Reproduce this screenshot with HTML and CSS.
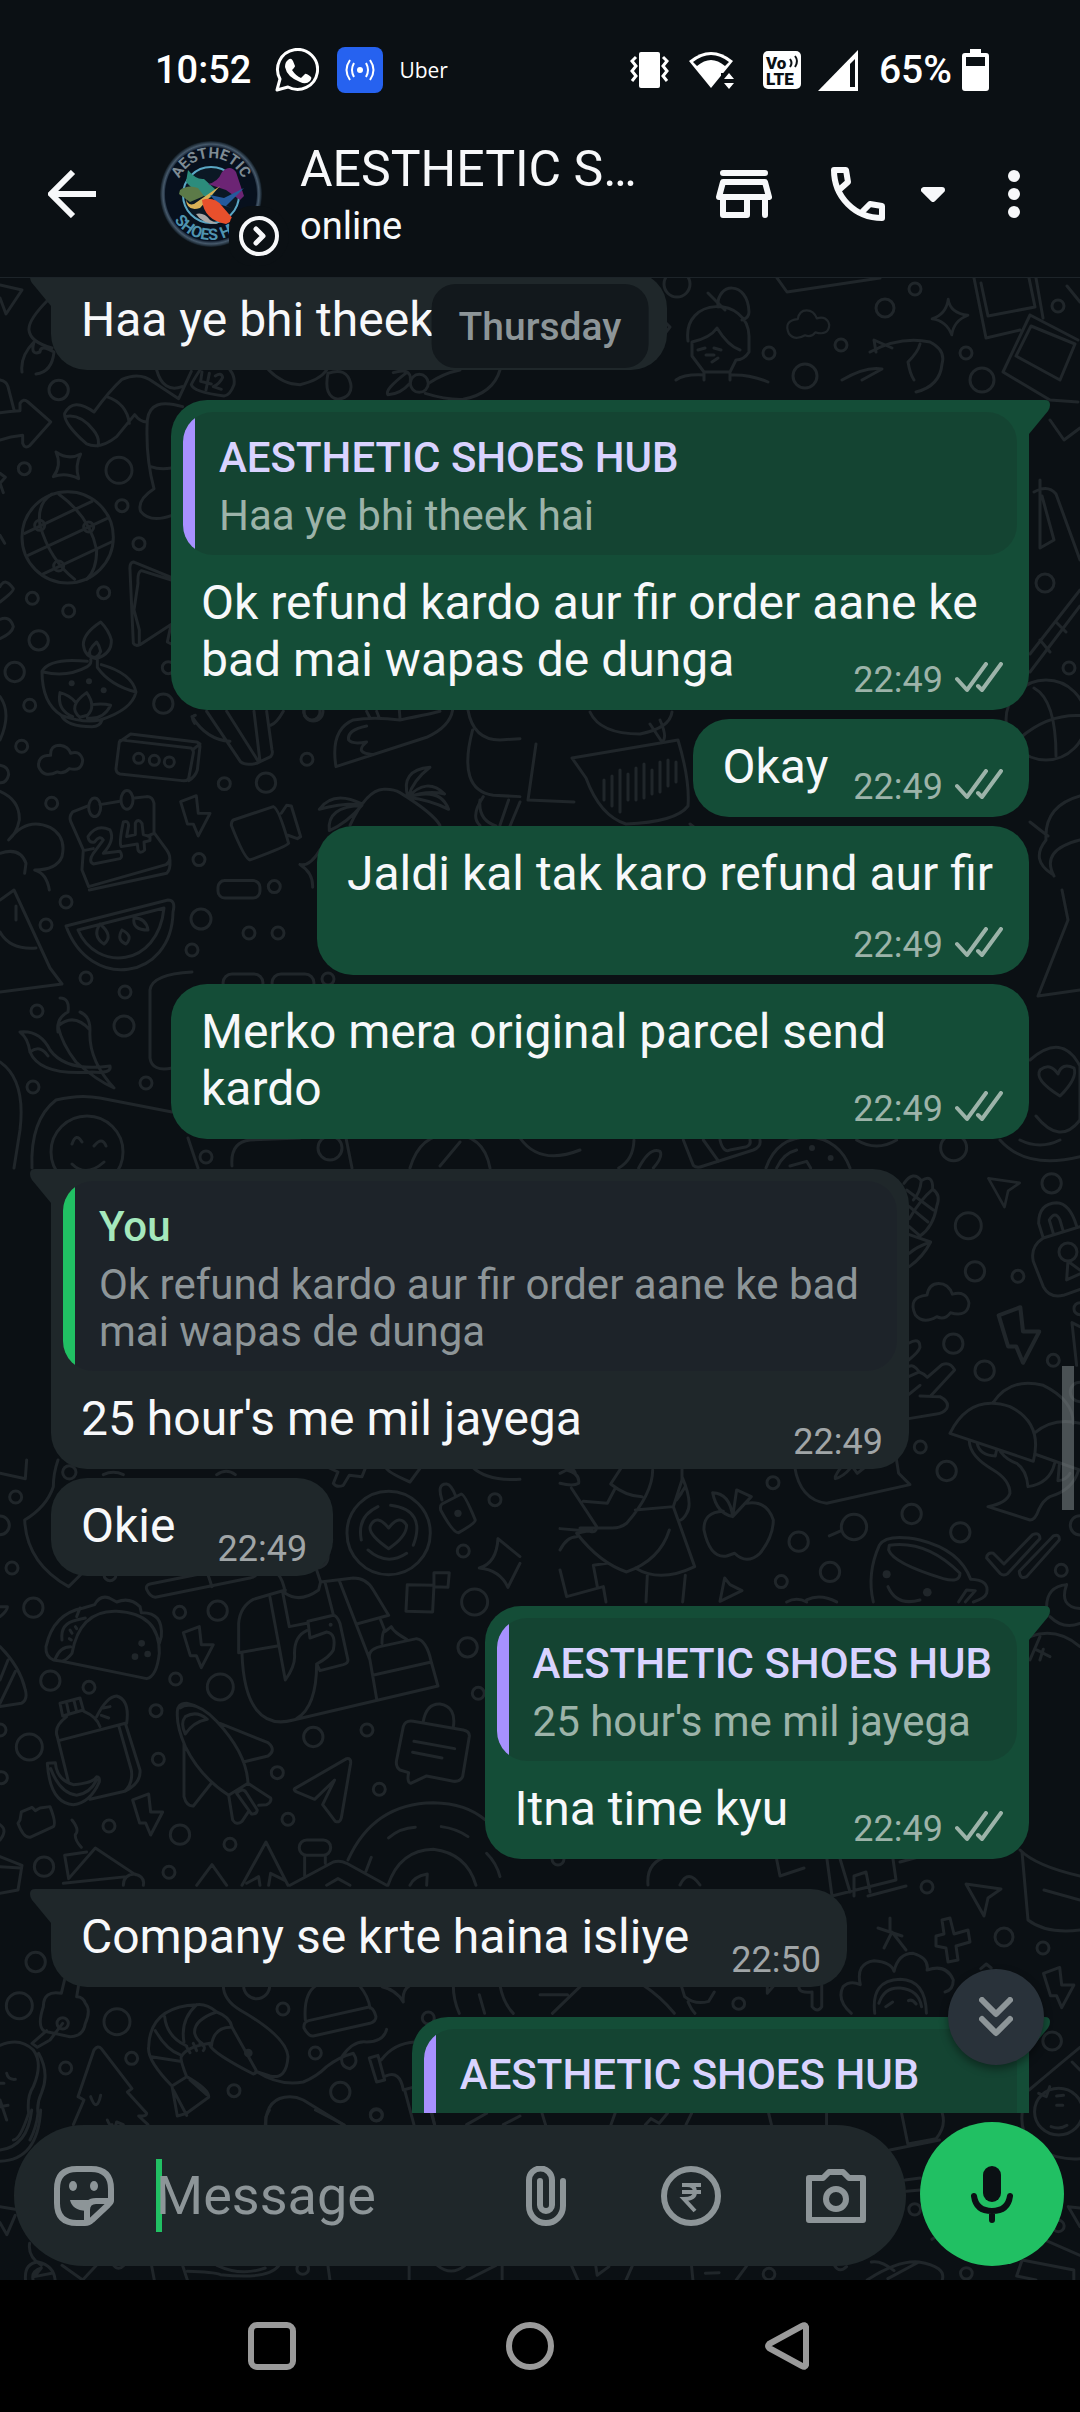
FILE: index.html
```html
<!DOCTYPE html>
<html lang="en">
    <head>
        <meta charset="utf-8">
        <meta name="viewport" content="width=device-width, initial-scale=1">
        <title>AESTHETIC SHOES HUB</title>
        <link rel="stylesheet" href="styles.css">
    </head>
    <body>
        <!-- Shared shapes -->
        <svg class="defs" width="0" height="0" aria-hidden="true">
            <symbol id="ticks" viewBox="0 0 48 31">
                <path d="M2 17L12 28L31 2M23 24L27 28L46 2" fill="none" stroke="currentColor" stroke-width="4" stroke-linecap="round" stroke-linejoin="round"/>
            </symbol>
            <symbol id="bolt" viewBox="0 0 34 46" overflow="visible">
                <path d="M2 8L18 2L20 20L32 20L20 43L15 31L9 31Z"/>
            </symbol>
            <symbol id="star" viewBox="0 0 40 40" overflow="visible">
                <path d="M18 0Q20 16 40 18Q24 24 22 40Q16 24 0 22Q16 17 18 0Z"/>
            </symbol>
            <symbol id="cloud" viewBox="0 0 60 44" overflow="visible">
                <path d="M16 14Q18 2 28 2Q38 2 42 13Q56 9 59 22Q58 37 40 32Q34 40 26 36Q12 44 4 34Q-4 16 16 14Z"/>
            </symbol>
            <symbol id="dart" viewBox="0 0 38 38" overflow="visible">
                <path d="M2 2L37 7L24 16L20 34Z"/>
            </symbol>
        </svg>

        <div class="status-bar">
            <time class="clock">10:52</time>
            <svg class="app-icon" width="44" height="44" viewBox="0 0 44 44">
                <path d="M2 42L5 31A20 20 0 1 1 13 39Z" fill="none" stroke="#fff" stroke-width="3" stroke-linejoin="round"/>
                <path d="M13 12q3-3 5 1l2 5q0 1-3 4q4 6 9 8l4-4q1-1 6 3q1 1-1 4q-4 4-10 1q-13-5-15-15q0-5 3-7z" fill="#fff"/>
            </svg>
            <svg class="uber-icon" width="46" height="46" viewBox="0 0 46 46">
                <rect width="46" height="46" rx="8" fill="#2662f0"/>
                <circle cx="23" cy="23" r="3" fill="#fff"/>
                <path d="M17 16q-4 7 0 14M29 16q4 7 0 14M13 13q-7 10 0 20M33 13q7 10 0 20" fill="none" stroke="#fff" stroke-width="2"/>
            </svg>
            <span class="uber">Uber</span>
            <div class="indicators">
                <svg width="39" height="38" viewBox="0 0 39 38">
                    <rect x="9" y="1" width="21" height="36" rx="2" fill="#fff"/>
                    <path d="M6 6L2 10L6 15L2 20L6 25L2 30M33 6L37 10L33 15L37 20L33 25L37 30" fill="none" stroke="#fff" stroke-width="3"/>
                </svg>
                <svg class="wifi" width="46" height="38" viewBox="0 0 46 38">
                    <path d="M0 10Q22-8 44 10L22 37Z" fill="#fff"/>
                    <path d="M4 11Q22-3 40 11L36 15Q22 3 8 15Z" fill="#0b1014"/>
                    <path d="M32 38V22h14v16z" fill="#0b1014"/>
                    <path d="M35 28L40 22L45 28ZM35 32L40 38L45 32Z" fill="#fff"/>
                </svg>
                <svg class="volte" width="38" height="38" viewBox="0 0 38 38">
                    <rect width="38" height="38" rx="5" fill="#fff"/>
                    <text x="3" y="18" class="volte-text">Vo</text>
                    <text x="3" y="34" class="volte-text">LTE</text>
                    <path d="M27 8q3 4 0 8M32 5q4 5 0 11" fill="none" stroke="#0b1014" stroke-width="2"/>
                </svg>
                <svg class="signal" width="41" height="41" viewBox="0 0 41 41">
                    <path d="M0 41L40 0V41Z" fill="#fff"/>
                    <path d="M32 14L37 9V37H32Z" fill="#0b1014"/>
                </svg>
                <span class="battery-level">65%</span>
                <svg width="27" height="42" viewBox="0 0 27 42">
                    <path d="M8 4V0H19V4H24Q27 4 27 7V39Q27 42 24 42H3Q0 42 0 39V7Q0 4 3 4Z" fill="#fff"/>
                    <rect x="4" y="8" width="19" height="9" fill="#0b1014"/>
                </svg>
            </div>
        </div>

        <header class="header">
            <button class="icon-btn" aria-label="Back">
                <svg width="48" height="48" viewBox="0 0 48 48"><path d="M25 2L3 24L25 46M3 24H48" fill="none" stroke="currentColor" stroke-width="6"/></svg>
            </button>
            <a class="contact" href="#profile">
                <span class="avatar">
                    <svg width="102" height="108" viewBox="0 0 102 108">
                        <defs>
                            <radialGradient id="glow">
                                <stop offset="88%" stop-color="#0a1526"/>
                                <stop offset="94%" stop-color="#46596b"/>
                                <stop offset="100%" stop-color="#101a22"/>
                            </radialGradient>
                            <path id="arc-top" d="M16 54A35 36 0 0 1 86 54"/>
                            <path id="arc-bottom" d="M7 56A44 44 0 0 0 95 56"/>
                        </defs>
                        <ellipse cx="51" cy="54" rx="51" ry="53" fill="url(#glow)"/>
                        <ellipse cx="51" cy="54" rx="46" ry="47" fill="#07101d"/>
                        <circle cx="51" cy="55" r="28" fill="#0b1824" stroke="#5aa6c4" stroke-width="2"/>
                        <path d="M28 30Q36 40 44 39L56 50L50 58L38 54L26 42Z" fill="#2c8c7c"/>
                        <path d="M20 50Q28 44 38 48L44 56L30 62L19 54Z" fill="#5c7a48"/>
                        <path d="M62 32Q70 24 76 32L84 56L80 60L66 50L48 44Q58 42 62 32Z" fill="#6c2474"/>
                        <path d="M26 58Q27 66 34 64L60 46L40 68Q26 72 26 58Z" fill="#d9b056"/>
                        <path d="M50 55L64 58L84 48L66 66L72 68L58 64Z" fill="#245a9c"/>
                        <path d="M42 60Q54 56 62 66L74 80L66 84Q44 80 42 60Z" fill="#e8502c"/>
                        <path d="M36 74Q44 72 50 80L58 84Q42 84 36 74Z" fill="#a9a8a6"/>
                        <text class="logo-top"><textPath href="#arc-top" startOffset="50%">AESTHETIC</textPath></text>
                        <text class="logo-bottom"><textPath href="#arc-bottom" startOffset="50%">SHOES HUB</textPath></text>
                    </svg>
                    <span class="badge">
                        <svg width="40" height="40" viewBox="0 0 40 40" fill="none" stroke="#f7f8fa"><circle cx="20" cy="20" r="18" stroke-width="4"/><path d="M17 13L24 20L17 27" stroke-width="5" stroke-linecap="round" stroke-linejoin="round"/></svg>
                    </span>
                </span>
                <span class="names">
                    <span class="title">AESTHETIC SHOES HUB</span>
                    <span class="presence">online</span>
                </span>
            </a>
            <button class="icon-btn store" aria-label="Store">
                <svg width="56" height="48" viewBox="0 0 56 48" fill="none" stroke="currentColor" stroke-width="6" stroke-linecap="round" stroke-linejoin="round"><path d="M7 3H49M7 12H49L53 27H3ZM7 27V45H31V27M49 27V45"/></svg>
            </button>
            <button class="icon-btn call" aria-label="Call">
                <svg width="54" height="54" viewBox="0 0 54 54" fill="none" stroke="currentColor" stroke-width="6" stroke-linejoin="round"><path d="M8 23L17 15L15 3H3C3 30 24 51 51 51V39L39 37L30 46"/></svg>
            </button>
            <button class="icon-btn call-more" aria-label="Call options">
                <svg width="24" height="15" viewBox="0 0 24 15"><path d="M3 3H21L12 12Z" fill="currentColor" stroke="currentColor" stroke-width="6" stroke-linejoin="round"/></svg>
            </button>
            <button class="icon-btn more" aria-label="More options">
                <svg width="12" height="48" viewBox="0 0 12 48" fill="currentColor"><circle cx="6" cy="6" r="6"/><circle cx="6" cy="24" r="6"/><circle cx="6" cy="42" r="6"/></svg>
            </button>
        </header>

        <div class="conversation">
            <svg class="wallpaper" viewBox="0 278 1080 2002" preserveAspectRatio="xMidYMin slice" aria-hidden="true">
                <!-- top strip -->
                <g>
                    <path d="M0 285L22 290L6 314L0 298M48 300Q28 320 29 330Q30 342 52 348M22 372Q20 356 34 342Q30 356 40 352Q40 344 54 352Q52 372 36 374"/>
                    <circle cx="677" cy="284" r="13"/>
                    <path d="M663 320L670 327L663 336M777 278L787 292L880 278M708 293L725 310"/>
                    <path d="M718 307C716 282 748 280 749 312Q749 318 742 320M688 341C682 296 748 296 749 336V352Q744 360 736 360L730 372H704L692 356V342Q710 338 717 328Q728 346 740 350M698 350L705 348M714 348L721 350M706 355L714 355M712 362L718 358M704 372V380M730 372V380M676 380Q684 374 704 375M730 375Q750 374 768 382"/>
                    <use href="#cloud" x="786" y="308" width="44" height="34"/>
                    <circle cx="769" cy="353" r="6"/><circle cx="841" cy="345" r="6"/><circle cx="915" cy="289" r="6"/><circle cx="966" cy="353" r="6"/><circle cx="885" cy="308" r="9"/><circle cx="805" cy="376" r="12"/><circle cx="1058" cy="306" r="6"/><circle cx="982" cy="380" r="12"/>
                    <use href="#star" x="932" y="299" width="36" height="36"/>
                    <path d="M870 352Q900 336 930 342Q946 350 942 364Q940 386 916 392M892 348L874 340L876 352M920 344Q918 352 908 362Q910 374 914 380M842 380Q866 366 882 369L862 380M974 278L986 338L1020 330M1036 278L1043 318M981 283L988 316L1035 307L1029 278M1030 315L1078 340M1030 315L1003 372L1050 400L1078 402M1031 326L1016 356L1060 380L1075 344ZM1067 286L1080 302"/>
                </g>
                <!-- right strip -->
                <g>
                    <path d="M1050 420L1064 440L1080 428M1034 492Q1048 484 1056 494L1080 560M1040 480V548L1054 540L1042 496M1080 590L1030 654M1080 606L1030 672M1040 640L1050 652M1056 622L1066 632"/>
                    <circle cx="1045" cy="583" r="9"/><circle cx="1069" cy="668" r="6"/><circle cx="1046" cy="720" r="40"/>
                    <path d="M1034 688Q1056 700 1056 756M1020 738Q1050 712 1086 716M1030 822Q1040 830 1048 836M1052 874Q1030 860 1046 840Q1044 806 1080 796M1080 840Q1040 850 1054 876M1062 890L1068 920L1038 996L1080 990M1030 1060Q1062 1032 1080 1066V1120Q1060 1146 1036 1116"/>
                    <path d="M1060 1096Q1034 1080 1040 1070Q1050 1062 1058 1074Q1062 1062 1074 1068Q1078 1078 1060 1096Z"/>
                    <path d="M1044 1890L1080 1900M1020 1850Q1036 1866 1080 1876M1022 1852L1028 1920Q1046 1934 1080 1930"/>
                </g>
                <!-- left column, upper part -->
                <g transform="translate(0 370) scale(.3333)">
                    <circle cx="176" cy="60" r="29"/><circle cx="73" cy="296" r="18"/><circle cx="357" cy="301" r="39"/><circle cx="366" cy="407" r="18"/><circle cx="417" cy="521" r="18"/><circle cx="97" cy="685" r="18"/><circle cx="206" cy="723" r="18"/><circle cx="311" cy="668" r="18"/><circle cx="116" cy="811" r="29"/><circle cx="44" cy="906" r="29"/><circle cx="89" cy="1006" r="18"/><circle cx="490" cy="1001" r="29"/><circle cx="65" cy="1129" r="18"/><circle cx="155" cy="1300" r="18"/><circle cx="673" cy="1241" r="18"/><circle cx="798" cy="1238" r="29"/><circle cx="921" cy="1168" r="18"/><circle cx="597" cy="1469" r="18"/><circle cx="940" cy="1024" r="29"/><circle cx="505" cy="893" r="18"/>
                    <path d="M0 30Q20 34 24 50L42 120M0 128Q30 124 60 122V100Q70 84 84 96L152 156L90 226Q74 238 68 220V196Q30 200 0 210"/>
                    <path d="M282 126Q330 60 366 28Q420 4 460 36L536 86L574 4M320 80Q380 100 388 160M282 126Q220 80 194 130Q190 160 260 222Q300 240 350 200L404 134Q420 156 440 156M196 140Q240 130 280 180Q300 204 294 228M470 0Q490 70 546 50M600 0Q580 30 574 44Q580 66 672 78Q690 76 702 44Q706 20 690 0M548 110Q450 80 442 150Q436 260 462 356Q410 390 422 424Q450 460 516 436M452 290Q480 300 514 294"/>
                    <path d="M606 6L602 34L634 42M628 10L618 60M646 18Q664 6 668 22Q660 40 640 50L664 58M806 0Q850 44 900 44Q960 30 980 0M984 10Q970 80 1014 88Q1060 80 1052 40Q1040 -10 984 10M1180 8Q1240 -10 1230 40Q1200 74 1164 74Q1152 60 1220 8M1286 40Q1330 10 1380 0M1276 70Q1340 90 1390 88Q1480 70 1500 0"/><circle cx="1258" cy="40" r="27"/>
                    <path d="M168 246Q206 272 242 252Q224 286 236 326Q196 306 160 320Q186 286 168 246Z"/>
                    <circle cx="203" cy="502" r="137"/><path d="M74 490L276 394M84 556L320 446M130 612L334 516M120 466Q110 400 156 372M120 466Q150 570 224 628M176 372Q270 440 290 540Q290 600 260 628"/><circle cx="119" cy="466" r="15"/><circle cx="266" cy="471" r="15"/><circle cx="176" cy="588" r="15"/>
                    <path d="M514 622L400 576Q388 578 390 600L400 820Q406 830 420 824L512 764M514 630L424 602Q412 606 414 640L402 720L418 780V824M512 770L502 816L514 822M0 650Q16 620 40 656Q42 664 0 696M0 748Q30 736 40 770Q36 790 0 806"/>
                    <path d="M302 756Q250 790 250 824Q254 862 290 866Q336 850 334 810Q326 780 302 756ZM290 816Q262 842 270 856Q290 872 302 844Q298 826 290 816ZM272 868Q276 880 262 890Q200 924 130 906M292 870V892Q330 946 408 966M262 874Q150 862 126 904Q126 1000 184 1036Q250 1060 300 1050Q396 1020 408 966Q396 910 304 884M184 1036Q200 1070 276 1070Q300 1070 306 1050M218 1040Q170 1020 180 968Q206 974 226 996M240 1042Q200 1010 260 968Q290 1010 262 1036ZM276 1004Q310 1000 332 1006Q310 1050 262 1044"/>
                    <g class="dots"><circle cx="215" cy="940" r="9"/><circle cx="267" cy="934" r="9"/><circle cx="311" cy="961" r="9"/></g>
                    <path d="M152 1156Q150 1126 180 1126Q206 1130 212 1150Q240 1140 248 1170Q246 1206 208 1196Q190 1214 172 1206Q130 1226 116 1190Q112 1156 152 1156Z"/>
                    <path d="M360 1112Q370 1108 380 1112L572 1134Q582 1138 580 1150L566 1226Q560 1234 546 1232L360 1212Q348 1208 348 1196L358 1116L392 1092L590 1116Q600 1120 600 1130L592 1200Q586 1220 566 1232M578 1140L600 1122"/><circle cx="416" cy="1165" r="15"/><circle cx="463" cy="1171" r="15"/><circle cx="508" cy="1176" r="15"/>
                    <path d="M576 1040Q620 1110 690 1114M620 1024L722 1176Q736 1188 770 1180L812 1160Q820 1150 816 1140L800 1024M680 1024L776 1176M762 1024L780 1174M586 1036Q570 1040 584 1060M812 1066Q830 1060 850 1024"/>
                    <path d="M1008 1190Q990 1080 1060 1050Q1120 1040 1200 1050Q1300 1030 1320 1024M1008 1190L1280 1102Q1350 1070 1358 1020M1100 1068Q1040 1080 1046 1110Q1056 1124 1100 1116Q1060 1150 1120 1154M1100 1024L1110 1044M1130 1024L1138 1044M1198 1020L1200 1044"/>
                    <path d="M1404 1020Q1420 1110 1500 1110L1560 1106M1418 1080Q1370 1260 1480 1276L1560 1280M1450 1280Q1410 1340 1440 1366M1526 1290L1500 1366"/>
                    <path d="M1050 1366Q1100 1260 1150 1258Q1180 1256 1200 1268Q1300 1330 1320 1366M958 1318Q1000 1260 1086 1302Q1020 1300 958 1318ZM1086 1306Q980 1310 988 1382Q1040 1360 1086 1306ZM1224 1282Q1200 1200 1290 1192Q1240 1230 1224 1282Q1280 1220 1334 1272Q1280 1260 1224 1282Q1320 1250 1346 1318Q1290 1290 1224 1282Z"/>
                    <use href="#bolt" x="536" y="1270" width="100" height="138"/>
                    <path d="M700 1350L820 1310Q836 1314 866 1420Q860 1430 750 1470Q734 1468 694 1366Q694 1354 700 1350ZM844 1330L860 1306L874 1308L902 1400L892 1406L864 1396"/>
                    <path d="M264 1308L218 1326Q206 1340 212 1354L250 1440L246 1500L266 1550L498 1484Q520 1470 500 1440L462 1388V1300Q458 1280 440 1280L404 1284M300 1304L360 1294M250 1442L280 1436M444 1398L462 1390M268 1560L500 1510Q512 1500 510 1470"/><ellipse cx="284" cy="1312" rx="18" ry="28"/><ellipse cx="381" cy="1290" rx="18" ry="28"/>
                    <path d="M264 1400Q290 1360 330 1380Q346 1410 310 1450L360 1444Q370 1460 360 1466L280 1482Q264 1474 280 1450L310 1410Q300 1394 284 1416Q266 1420 264 1400ZM370 1356Q384 1350 386 1366L380 1400L406 1394V1360Q414 1344 426 1360L430 1394L450 1400V1412L432 1416L434 1440Q420 1454 414 1440L412 1422L364 1430Q356 1420 370 1356Z"/>
                    <path d="M0 1264Q60 1290 58 1350Q50 1390 26 1410Q80 1340 150 1372Q200 1400 186 1460Q170 1500 104 1500Q140 1510 148 1560M0 1450Q60 1430 78 1480L74 1510M0 1186Q26 1190 26 1214Q20 1240 0 1238M0 980Q36 1030 0 1110"/>
                    <path d="M900 1484Q930 1490 960 1440M900 1484Q940 1510 938 1552M0 310L16 322L0 340L10 368M0 496L14 520"/>
                    <rect x="654" y="1532" width="126" height="52" rx="20"/><circle cx="823" cy="1550" r="18"/>
                </g>
                <!-- left column, melon and chillies -->
                <g>
                    <path d="M66 926L168 900Q176 900 173 912C172 980 90 992 66 926ZM78 930L164 908C158 968 96 972 78 930ZM100 924Q92 936 104 944Q114 936 100 924M122 930Q116 940 126 944Q134 936 122 930M134 918Q132 930 148 930Q146 918 134 918"/>
                    <circle cx="201" cy="919" r="10"/><circle cx="249" cy="933" r="6"/><circle cx="278" cy="933" r="6"/><circle cx="192" cy="950" r="6"/><circle cx="46" cy="925" r="6"/><circle cx="66" cy="902" r="6"/><circle cx="86" cy="978" r="6"/><circle cx="125" cy="992" r="6"/><circle cx="124" cy="1026" r="10"/><circle cx="37" cy="1011" r="6"/><circle cx="146" cy="1083" r="6"/><circle cx="33" cy="1087" r="6"/>
                    <path d="M0 900L14 890L50 968L62 984L0 992M0 932Q10 950 36 948M16 906V920M192 972Q152 974 150 990V1058Q152 1072 172 1068"/>
                    <rect x="223" y="974" width="40" height="18" rx="9"/><rect x="272" y="974" width="42" height="18" rx="9"/><circle cx="328" cy="979" r="6"/>
                    <path d="M60 998Q70 998 68 1012Q56 1018 58 1032M80 1012Q90 1016 90 1030M58 1026Q74 1012 90 1030Q88 1060 114 1088Q96 1080 76 1062Q62 1044 58 1026ZM20 1032Q40 1030 50 1050Q66 1072 110 1066Q112 1074 92 1072Q40 1076 30 1052Q28 1038 20 1032M30 1052Q40 1044 48 1056"/>
                    <path d="M32 1168Q30 1120 56 1100Q80 1094 100 1098L172 1112"/><circle cx="87" cy="1152" r="36"/><path d="M72 1144Q76 1132 82 1142M94 1146Q102 1136 106 1146M72 1164Q86 1178 104 1162M0 1062Q26 1080 20 1130L14 1168"/>
                    <path d="M188 1138L198 1168M232 1166Q230 1142 250 1140L300 1138M346 1138L352 1168M410 1168Q420 1134 450 1134Q484 1134 490 1168M440 1166L460 1142M520 1138Q540 1166 580 1150"/>
                    <circle cx="330" cy="1148" r="12"/><circle cx="206" cy="1157" r="6"/>
                </g>
                <!-- between the outgoing bubbles -->
                <g>
                    <path d="M572 758L678 740Q690 780 688 806Q676 822 626 824Q600 816 586 778ZM604 780V800M612 776V806M620 770V812M628 774V800M636 768V800M644 764V798M652 770V794M660 762V792M668 760V786M676 762V782"/>
                    <path d="M590 712Q600 734 640 734Q670 728 672 712M650 724L662 742Q668 738 660 720M536 744L528 800L574 802M480 800Q478 820 496 826M520 802L510 826M690 824L700 832"/>
                    <circle cx="312" cy="712" r="8"/>
                </g>
                <!-- middle and right -->
                <g transform="translate(560 1140) scale(.3333)">
                    <circle cx="1181" cy="23" r="39"/><circle cx="1475" cy="130" r="29"/><circle cx="1225" cy="257" r="39"/><circle cx="1245" cy="394" r="29"/><circle cx="1374" cy="409" r="18"/><circle cx="1180" cy="611" r="29"/><circle cx="1274" cy="692" r="29"/><circle cx="1480" cy="661" r="18"/><circle cx="1081" cy="921" r="18"/><circle cx="1160" cy="993" r="29"/><circle cx="639" cy="1028" r="18"/><circle cx="716" cy="1205" r="29"/><circle cx="882" cy="1161" r="38"/><circle cx="1055" cy="1122" r="29"/><circle cx="1201" cy="1177" r="29"/><circle cx="664" cy="1325" r="18"/><circle cx="810" cy="1296" r="29"/><circle cx="1504" cy="1291" r="18"/><circle cx="1560" cy="756" r="29"/><circle cx="1560" cy="1156" r="29"/><circle cx="1560" cy="506" r="18"/>
                    <path d="M844 1172L808 1188M222 0Q220 60 176 84M236 84Q270 20 300 34Q310 50 280 84M370 0L400 76Q410 86 430 78L580 30Q604 20 600 0M430 0L476 64M480 0Q490 40 510 30L560 20Q574 14 570 0M618 84Q650 -10 750 -10Q840 0 870 84M650 84Q670 40 710 30M690 78L740 64L752 84M890 0Q950 36 1010 0M1320 0Q1400 90 1560 50M1380 0Q1440 30 1500 0"/>
                    <g class="dots"><circle cx="756" cy="24" r="9"/><circle cx="812" cy="54" r="9"/><circle cx="980" cy="1303" r="12"/><circle cx="1102" cy="1357" r="13"/></g>
                    <use href="#dart" x="1274" y="110" width="114" height="102"/>
                    <path d="M1032 130Q1060 90 1084 122Q1120 100 1118 148Q1144 164 1130 200Q1120 260 1080 288L1048 260M1040 150L1120 210M1048 200L1104 246M1084 122Q1080 160 1060 180M1118 148Q1080 180 1048 236M1048 284L1112 306Q1090 350 1048 380M1112 306Q1070 320 1048 340"/>
                    <path d="M1450 294L1436 250Q1436 190 1490 188Q1530 190 1550 258M1480 280L1468 240Q1486 210 1500 240L1510 274M1450 294L1560 260M1450 294Q1410 320 1420 364L1450 440Q1470 476 1510 466L1560 448M1524 364L1520 420L1560 402M1524 364L1560 390"/><circle cx="1524" cy="336" r="27"/>
                    <use href="#cloud" x="1054" y="424" width="176" height="130"/>
                    <use href="#bolt" x="1308" y="492" width="138" height="190"/>
                    <path d="M1560 560L1536 548L1550 676M1046 610Q1080 590 1080 622Q1076 636 1046 660M1046 680Q1060 670 1078 696L1046 710M1078 696Q1090 700 1102 712L1146 674Q1170 664 1184 690L1114 766M1046 764L1080 736M1080 768L1140 770Q1170 786 1160 806Q1150 820 1130 822L1046 836"/>
                    <path d="M1170 880Q1230 760 1350 800Q1450 850 1420 964ZM1298 790Q1350 710 1450 736Q1540 780 1540 850M1422 880Q1480 830 1560 850M1424 942L1560 990M1228 904Q1230 950 1300 990Q1350 1020 1350 1060Q1340 1090 1284 1100L1410 1140Q1426 1140 1436 1110Q1450 1080 1470 1070Q1540 1050 1556 990M1252 912Q1260 946 1306 948L1310 930M1322 936Q1340 960 1370 970Q1400 990 1404 1040Q1470 1030 1484 970M1498 976L1494 1022Q1520 1020 1530 1000"/>
                    <path d="M458 1058Q510 1060 518 1130Q470 1120 458 1058ZM518 1130L530 1050L574 1070ZM490 1114Q430 1116 432 1170Q450 1256 500 1248L524 1240Q560 1276 600 1240Q640 1190 640 1140Q620 1080 560 1090"/>
                    <path d="M704 980Q720 1080 800 1090L1050 1034L1016 1000L1008 950M826 1010Q850 960 870 986Q850 1010 826 1016ZM880 984L892 1000L912 984"/>
                    <path d="M0 1000L20 990Q60 1000 56 1030Q40 1040 0 1030M20 990Q40 980 46 1000M34 1044L110 1160Q110 1180 90 1174L0 1166M70 1084L142 1090L166 1044M186 980L152 1032Q200 1070 246 1070M278 990Q278 1060 200 1150Q180 1166 150 1164H60M366 980V1020L340 1100L404 1280Q300 1330 226 1284M226 1110L340 1100M366 1010Q400 1090 380 1120Q370 1140 356 1142M364 1060L350 1080L376 1040M50 1180Q120 1270 200 1296Q300 1260 328 1170M50 1180L96 1170M140 1270L100 1276L112 1340M0 1290L20 1370L130 1340L138 1386M262 1306L258 1386M376 1306L368 1386M0 1230Q20 1190 50 1190"/>
                    <path d="M494 1314L510 1334L546 1352L480 1384ZM680 1386Q710 1370 740 1386M740 1380Q780 1360 830 1386"/>
                    <path d="M958 1216Q980 1180 1080 1200Q1200 1230 1232 1318Q1290 1320 1280 1360Q1274 1376 1240 1386M958 1216Q920 1300 940 1386M988 1216Q1100 1200 1200 1300Q1200 1330 1150 1316Q1000 1270 986 1230ZM984 1340Q1010 1400 1080 1380M1196 1386L1220 1350L1246 1352L1216 1386"/>
                    <path d="M1300 1240L1332 1272L1418 1184Q1440 1176 1440 1196L1344 1300Q1332 1310 1320 1300L1280 1254Q1282 1236 1300 1240ZM1378 1294L1480 1188Q1500 1180 1498 1200L1400 1310Q1380 1320 1378 1294Z"/>
                    <path d="M1520 1334Q1460 1340 1460 1400M1470 1430Q1510 1470 1560 1450M1520 1334Q1496 1400 1560 1406M1410 1490Q1490 1460 1560 1520M1440 1490L1410 1560M1430 1530L1470 1550M1450 1528L1440 1560"/>
                </g>
                <!-- left column, lower part -->
                <g transform="translate(0 1460) scale(.3333)">
                    <circle cx="208" cy="37" r="20"/><circle cx="47" cy="111" r="18"/><circle cx="0" cy="196" r="28"/><circle cx="36" cy="324" r="18"/><circle cx="330" cy="344" r="18"/><circle cx="100" cy="443" r="29"/><circle cx="539" cy="457" r="18"/><circle cx="653" cy="452" r="29"/><circle cx="151" cy="662" r="29"/><circle cx="267" cy="682" r="18"/><circle cx="527" cy="657" r="18"/><circle cx="661" cy="681" r="39"/><circle cx="468" cy="752" r="18"/><circle cx="88" cy="861" r="39"/><circle cx="0" cy="810" r="18"/><circle cx="4" cy="953" r="18"/><circle cx="475" cy="898" r="18"/><circle cx="940" cy="831" r="29"/><circle cx="1101" cy="810" r="18"/><circle cx="832" cy="938" r="18"/><circle cx="1138" cy="988" r="18"/><circle cx="864" cy="1078" r="18"/><circle cx="327" cy="1098" r="18"/><circle cx="540" cy="1124" r="29"/><circle cx="690" cy="1153" r="18"/><circle cx="132" cy="1220" r="29"/><circle cx="507" cy="1237" r="18"/><circle cx="1424" cy="426" r="39"/><circle cx="1403" cy="562" r="29"/><circle cx="1435" cy="700" r="18"/><circle cx="1390" cy="273" r="18"/><circle cx="1485" cy="119" r="18"/><circle cx="1166" cy="219" r="125"/>
                    <path d="M0 40L76 56L80 0M174 0Q160 40 160 80Q140 140 74 180Q80 310 206 380L250 336M980 20L1014 36L1000 70Q1010 84 1030 76L1048 46L1086 50L1098 20M1156 20Q1160 36 1230 66L1264 20M1416 20Q1460 64 1560 58M310 44Q340 30 370 44M650 44Q680 24 706 44M974 230Q1000 224 994 246M984 280Q990 330 920 328"/>
                    <path d="M1166 266Q1100 220 1112 196Q1130 160 1166 204Q1200 160 1220 196Q1220 230 1166 266ZM1084 240Q1070 170 1134 140M1172 136Q1280 150 1240 256M1104 270Q1160 320 1220 280"/>
                    <path d="M1326 120Q1310 70 1340 72Q1354 74 1366 106M1326 132L1384 102Q1394 102 1426 180Q1426 190 1376 218Q1360 220 1322 150Q1320 136 1326 132Z"/><g class="dots"><circle cx="1374" cy="160" r="11"/><circle cx="425" cy="550" r="10"/><circle cx="405" cy="590" r="10"/><circle cx="443" cy="582" r="10"/><circle cx="992" cy="494" r="6"/></g>
                    <path d="M1494 236L1560 290M1494 236Q1490 310 1438 324Q1500 330 1524 382L1560 310M1222 374L1302 376L1298 456L1218 454ZM1302 338L1348 338L1344 382L1302 380Z"/>
                    <path d="M440 388Q436 376 450 372L610 340M440 388Q450 410 466 412L750 354Q770 350 770 338M624 344L636 380"/>
                    <path d="M186 604L440 656Q470 650 478 580Q480 460 350 454Q240 450 216 580Q200 600 186 604L160 600Q136 590 138 560Q160 460 250 444L284 434Q300 404 328 414L350 426Q390 410 420 440L424 458Q490 456 484 530L478 550M230 470L240 444M186 540Q180 490 230 480L256 474M166 596Q180 560 212 560M210 510L216 520M226 500L230 506M208 536L214 540"/>
                    <use href="#bolt" x="544" y="494" width="102" height="138"/><use href="#bolt" x="392" y="996" width="102" height="138"/>
                    <path d="M832 340Q850 360 856 400Q900 430 956 390L962 366L950 330M962 366L1060 354Q1100 354 1120 390L1166 466L1070 492M856 390L760 418Q720 440 716 490V578L832 558M726 580Q730 700 770 750Q810 800 880 780L1314 678L1294 606L1118 646M848 396L868 500L920 490M810 412L856 660Q884 620 884 590Q880 530 920 512M976 370L1000 464M1018 362L1110 600L1130 716M924 484L1000 466Q1010 466 1020 490L1044 600Q1044 610 1030 614L960 632L950 612M924 484L930 534L980 516Q1010 520 1000 570Q990 590 950 612Q950 740 890 776M1110 600Q1100 570 1140 560L1250 536Q1280 540 1294 606M1142 480L1154 510Q1146 520 1146 550M1156 514L1174 500Q1180 516 1220 538"/>
                    <path d="M180 730L240 714L250 750L188 768ZM200 730L206 758M222 722L230 754M200 770Q160 800 172 830L206 968M252 754Q290 770 300 800M176 842L376 790M290 770Q320 710 350 708Q390 720 380 790M310 744L330 740M304 766L326 774M356 796L394 930Q400 970 374 994L270 1018M376 790L420 930Q424 970 374 994M142 910L166 908Q170 960 220 974Q280 970 290 950Q300 950 298 966Q270 1030 220 1034Q150 1030 142 910ZM152 926Q180 1000 230 1006Q270 1000 290 960"/>
                    <path d="M60 1080L54 1090Q70 1134 90 1132L160 1100Q170 1090 150 1040L120 1044L106 1052L96 1042L64 1056ZM216 1080Q240 1110 226 1124Q224 1140 244 1162M0 740L64 730Q84 720 76 690Q60 620 0 560M0 730L46 634M0 660L24 600M0 1190L66 1216L54 1290L0 1300M0 1220L62 1224M0 470Q24 450 22 440L0 440M0 1094Q24 1110 0 1140"/>
                    <path d="M532 760Q530 730 560 730Q610 740 650 784Q740 880 744 970L686 1006Q600 950 556 860Q530 800 532 760ZM556 822Q540 790 556 770Q590 750 622 778Q580 786 556 822ZM540 744Q560 730 590 740M660 790L804 848Q830 870 804 888L730 906M552 850V1010Q560 1040 580 1038L634 970M744 970L812 1014Q816 1026 800 1034L776 1036M686 1006L698 1080Q710 1098 726 1084L746 1054M710 1000Q730 980 740 1000L772 1050Q770 1064 754 1062Z"/>
                    <path d="M884 986Q880 990 890 996L944 1018L1004 960L968 1034L1006 1084Q1020 1090 1024 1074L1052 910Q1054 894 1040 896Z"/>
                    <path d="M1240 784L1390 810Q1410 814 1408 830L1388 950Q1380 966 1360 964L1280 948L1232 970Q1220 966 1226 938L1200 930Q1186 920 1190 900L1210 800Q1216 780 1240 784ZM1270 784Q1280 730 1320 732Q1370 740 1360 802M1242 844L1364 866M1238 877L1326 894"/>
                    <path d="M194 1186L260 1176M194 1186L206 1256L286 1164L406 1244M190 1270L380 1250M370 1276Q370 1244 404 1242Q436 1250 430 1276M590 1276L636 1214L680 1276M726 1276L798 1146L864 1276M740 1270L776 1250L780 1276M806 1276L812 1240L856 1262M870 1276L1000 1206Q1020 1200 1040 1210L1160 1276M914 1190V1250M976 1190V1210M980 1276L1014 1256L1050 1276M1044 1200Q1120 1030 1300 1028Q1400 1030 1456 1080M1164 1276Q1200 1170 1300 1168Q1400 1180 1428 1276M1230 1276Q1240 1250 1282 1242L1280 1276M1166 1134Q1200 1104 1246 1102M1324 1100Q1370 1106 1404 1130M1114 1192L1098 1234M1460 1180Q1490 1210 1500 1250"/><rect x="898" y="1140" width="94" height="46" rx="22"/>
                </g>
                <!-- around the last messages -->
                <g transform="translate(0 1960) scale(.3333)">
                    <circle cx="107" cy="6" r="29"/><circle cx="58" cy="137" r="39"/><circle cx="351" cy="185" r="39"/><circle cx="197" cy="324" r="18"/><circle cx="395" cy="295" r="18"/><circle cx="770" cy="77" r="39"/><circle cx="849" cy="147" r="18"/><circle cx="946" cy="279" r="18"/><circle cx="702" cy="392" r="18"/><circle cx="1021" cy="396" r="29"/><circle cx="1129" cy="464" r="18"/><circle cx="1285" cy="174" r="18"/><circle cx="188" cy="190" r="17"/>
                    <path d="M196 50L184 100Q130 90 130 140Q110 200 134 214L210 230Q250 230 256 190Q274 150 256 130Q250 110 230 110L236 74M188 190L150 240L112 262L96 250L140 212M0 256Q60 230 100 270Q130 310 100 380Q80 410 86 460Q60 540 40 540M116 280Q150 340 124 400Q110 430 114 460Q110 500 90 540M0 370H12M20 340Q24 360 46 358M0 440L24 436M0 420L20 480"/>
                    <path d="M220 494L252 420L234 410L282 270Q294 254 304 266L396 386L382 396L440 460Q440 470 416 468L444 494M272 410Q290 460 302 406M322 480Q330 500 336 494M346 500L350 486L370 494"/>
                    <path d="M630 250Q560 260 544 290Q540 300 560 350L516 378Q440 300 446 260Q450 140 590 134Q620 130 650 156Q690 170 696 202Q640 200 634 260ZM630 256Q640 280 760 342Q770 340 768 330L696 202M454 290L540 304M466 212Q500 270 540 284M494 170Q500 230 560 258M590 134Q540 180 552 246M650 156Q580 180 584 220Q590 240 606 250M516 378L532 468L560 460L626 412Q630 390 560 350M520 390L560 466M570 360L620 404M560 260L570 278M580 250L590 272M600 250Q620 260 610 272"/>
                    <path d="M670 76Q670 120 720 150Q860 230 864 290Q860 360 810 348L768 334Q840 380 910 366Q950 350 980 320Q1020 290 1060 280Q1080 310 1050 326Q1020 320 1026 290Q1060 240 1100 246Q1150 246 1160 208"/><g class="dots"><circle cx="745" cy="279" r="13"/></g>
                    <path d="M916 180Q910 100 950 76M1078 76Q1106 110 1110 144M926 182L1104 142Q1120 140 1128 170Q1128 184 1110 190L940 228Q926 230 912 204Q910 186 926 182ZM1146 80Q1190 90 1210 126Q1206 90 1230 76M1360 76Q1360 120 1378 160M1438 104L1454 160M1500 76Q1510 130 1540 160M796 494Q800 410 870 410Q890 410 910 420L1030 494M1108 294L1134 286L1154 360L1130 366ZM1144 300Q1180 250 1246 246M1158 348Q1200 330 1210 390L1246 380M1214 390L1242 494M1400 494L1460 460M1510 494L1560 468M1296 460L1304 494"/>
                </g>
                <!-- right of the last messages, and under the input -->
                <g transform="translate(540 1960) scale(.3444 .3333)">
                    <circle cx="577" cy="131" r="17"/><circle cx="1487" cy="243" r="27"/><circle cx="1088" cy="748" r="17"/><circle cx="1505" cy="798" r="17"/><circle cx="1506" cy="455" r="70"/><circle cx="665" cy="942" r="17"/><circle cx="1238" cy="940" r="17"/>
                    <path d="M36 160L120 76M300 76Q350 110 390 160M0 104H80M410 76L420 110Q450 136 490 124L506 96M430 126Q440 150 450 160M660 76V100L680 76M752 80Q750 100 790 96V140Q806 160 818 140V76M904 160Q860 120 880 80Q900 60 930 74Q916 10 970 2Q1020 6 1028 34Q1040 -20 1084 -20Q1130 -6 1124 30Q1180 10 1200 60Q1200 90 1176 96M972 160Q960 60 1046 58Q1120 60 1122 160M984 130Q1000 80 1046 84Q1100 90 1108 140M1004 140L1024 126M1070 122Q1080 116 1092 132M1280 26L1296 12L1310 24"/>
                    <use href="#bolt" x="1456" y="16" width="100" height="136"/>
                    <path d="M1420 390Q1500 320 1568 262M1545 306L1568 330M1448 400L1470 410L1480 380M1500 408L1520 406M1500 436H1518M1484 500Q1510 510 1530 496M1400 460Q1390 560 1500 590Q1540 600 1568 596M1050 460L1068 552L1150 536Q1180 500 1168 460M1016 570L1160 540M1060 660L1104 654M1064 694L1104 690M664 460L672 494M832 460V494M6 460L16 494M218 460L206 494M306 494L322 476L346 490L370 460M440 460L424 494M1534 740L1568 744M1534 740L1568 800M1138 838L1150 830M1470 842L1568 886M1400 900L1384 948L1440 960M1400 900L1550 930V960"/>
                    <path d="M92 918L110 960M162 918L166 946L200 920M268 918L250 960M440 918L444 960M480 940L520 938M600 918L570 960M962 906Q990 900 1028 932M950 960Q1040 900 1100 906Q1180 920 1168 960M1010 956L1100 906M856 918Q870 940 890 920"/>
                </g>
                <g transform="translate(0 2110) scale(.3444 .3333)">
                    <path d="M0 120Q80 110 92 0M118 0Q110 150 0 154M0 290L44 298M44 316L20 374L0 338M86 400Q80 440 120 466M74 510Q70 460 110 456Q156 466 160 510M96 510Q90 484 120 474L100 500L150 490M180 466L240 510L280 466M330 466Q344 484 360 466M440 466L448 510M530 466L544 510M544 484Q620 486 640 494Q780 510 810 466M630 466Q700 500 770 474M952 466L958 510M1188 466V510M1270 466Q1310 500 1350 466M1440 466L1356 510M1458 466V510M772 45V20L782 0M916 0L1000 45M1250 0L1262 45"/><circle cx="1093" cy="16" r="17"/><circle cx="879" cy="476" r="17"/>
                </g>
                <path d="M900 1862L944 1850M868 1896L906 1886M850 1892L838 1852M776 1856L780 1876L804 1868M826 1852L832 1896L896 1880L892 1852M854 1896V1876L866 1872L870 1892M648 1885Q646 1862 668 1856M700 1885Q688 1868 680 1885"/>
                <use href="#dart" x="964" y="1882" width="38" height="38"/>
                <path d="M890 1918V1932M878 1928L902 1936M884 1948L892 1932L906 1950M942 1920L950 1918L954 1934L968 1930L970 1942L956 1946L958 1960L948 1962L946 1948L936 1946L936 1936L944 1934Z"/>
                <circle cx="927" cy="1887" r="6"/><circle cx="1004" cy="1937" r="9"/><circle cx="1043" cy="1948" r="6"/><circle cx="558" cy="1859" r="6"/>
            </svg>

            <main class="chat">
                <div class="day">Thursday</div>
                <div class="messages">
                    <div class="bubble in tail">
                        <div class="body"><p>Haa ye bhi theek hai</p><span class="meta"><time>22:48</time></span></div>
                    </div>
                    <div class="bubble out tail">
                        <blockquote class="quote">
                            <cite>AESTHETIC SHOES HUB</cite>
                            <p>Haa ye bhi theek hai</p>
                        </blockquote>
                        <div class="body tuck"><p>Ok refund kardo aur fir order aane ke bad mai wapas de dunga</p><span class="meta"><time>22:49</time><svg class="ticks"><use href="#ticks"/></svg></span></div>
                    </div>
                    <div class="bubble out">
                        <div class="body"><p>Okay</p><span class="meta"><time>22:49</time><svg class="ticks"><use href="#ticks"/></svg></span></div>
                    </div>
                    <div class="bubble out">
                        <div class="body stack"><p>Jaldi kal tak karo refund aur fir</p><span class="meta"><time>22:49</time><svg class="ticks"><use href="#ticks"/></svg></span></div>
                    </div>
                    <div class="bubble out">
                        <div class="body tuck"><p>Merko mera original parcel send kardo</p><span class="meta"><time>22:49</time><svg class="ticks"><use href="#ticks"/></svg></span></div>
                    </div>
                    <div class="bubble in tail">
                        <blockquote class="quote own">
                            <cite>You</cite>
                            <p>Ok refund kardo aur fir order aane ke bad mai wapas de dunga</p>
                        </blockquote>
                        <div class="body"><p>25 hour's me mil jayega</p><span class="meta"><time>22:49</time></span></div>
                    </div>
                    <div class="bubble in">
                        <div class="body"><p>Okie</p><span class="meta"><time>22:49</time></span></div>
                    </div>
                    <div class="bubble out tail">
                        <blockquote class="quote">
                            <cite>AESTHETIC SHOES HUB</cite>
                            <p>25 hour's me mil jayega</p>
                        </blockquote>
                        <div class="body"><p>Itna time kyu</p><span class="meta"><time>22:49</time><svg class="ticks"><use href="#ticks"/></svg></span></div>
                    </div>
                    <div class="bubble in tail">
                        <div class="body"><p>Company se krte haina isliye</p><span class="meta"><time>22:50</time></span></div>
                    </div>
                    <div class="bubble out tail">
                        <blockquote class="quote">
                            <cite>AESTHETIC SHOES HUB</cite>
                            <p>Company se krte haina isliye</p>
                        </blockquote>
                        <div class="body"><p>Ok</p><span class="meta"><time>22:50</time><svg class="ticks"><use href="#ticks"/></svg></span></div>
                    </div>
                </div>
                <div class="scrollbar"></div>
            </main>
            <button class="scroll-down" aria-label="Scroll to bottom">
                <svg width="34" height="40" viewBox="0 0 34 40" fill="none" stroke="currentColor" stroke-width="6" stroke-linecap="round" stroke-linejoin="round"><path d="M3 3L17 17L31 3M3 22L17 36L31 22"/></svg>
            </button>

            <form class="composer">
                <div class="pill">
                    <button type="button" class="tool" aria-label="Stickers">
                        <svg width="60" height="60" viewBox="0 0 60 60">
                            <path d="M57 35V23Q57 3 37 3H23Q3 3 3 23V37Q3 57 23 57H31Q35 57 38 54L54 39Q57 36 57 35ZM33 57V44Q33 35 42 35H57" fill="none" stroke="currentColor" stroke-width="6"/>
                            <ellipse cx="19" cy="20" rx="4" ry="5" fill="currentColor"/><ellipse cx="40" cy="20" rx="4" ry="5" fill="currentColor"/>
                            <path d="M16 34H38Q34 36 32 45Q18 44 16 34Z" fill="currentColor"/>
                        </svg>
                    </button>
                    <div class="field"><input type="text" placeholder="Message" aria-label="Message"></div>
                    <button type="button" class="tool" aria-label="Attach">
                        <svg width="40" height="60" viewBox="0 0 40 60" fill="none" stroke="currentColor" stroke-width="6" stroke-linecap="round"><path d="M37 15V40A17 17 0 0 1 3 40V14A11 11 0 0 1 26 14V39A6 6 0 0 1 14 39V15"/></svg>
                    </button>
                    <button type="button" class="tool" aria-label="Payment">
                        <svg width="60" height="60" viewBox="0 0 60 60" fill="none" stroke="currentColor"><circle cx="30" cy="30" r="27" stroke-width="6"/><path d="M21 19H40M21 26H40M21 19H26Q34 19 34 26Q34 33 23 33L34 45" stroke-width="4"/></svg>
                    </button>
                    <button type="button" class="tool" aria-label="Camera">
                        <svg width="60" height="54" viewBox="0 0 60 54" fill="none" stroke="currentColor" stroke-width="6" stroke-linejoin="round"><path d="M3 9H17L23 3H37L43 9H57V51H3Z"/><circle cx="30" cy="30" r="10"/></svg>
                    </button>
                </div>
                <button type="button" class="mic" aria-label="Voice message">
                    <svg width="42" height="57" viewBox="0 0 42 57"><rect x="12" width="18" height="36" rx="9" fill="currentColor"/><path d="M3 30Q5 45 21 45Q37 45 39 30M21 45V54" fill="none" stroke="currentColor" stroke-width="6" stroke-linecap="round"/></svg>
                </button>
            </form>
        </div>

        <nav class="nav-bar">
            <button aria-label="Recent apps"><svg width="48" height="48" viewBox="0 0 48 48"><rect x="3" y="3" width="42" height="42" rx="6"/></svg></button>
            <button aria-label="Home"><svg width="48" height="48" viewBox="0 0 48 48"><circle cx="24" cy="24" r="21"/></svg></button>
            <button aria-label="Go back"><svg width="48" height="48" viewBox="0 0 48 48"><path d="M42 5V43Q41 46 38 44L5 26Q3 24 5 22L38 4Q41 2 42 5Z"/></svg></button>
        </nav>
    </body>
</html>
```
FILE: styles.css
```css
* {
    box-sizing: border-box;
}

body {
    display: flex;
    flex-direction: column;
    height: 100vh;
    margin: 0;
    background-color: #0b1014;
    color: #f7f8fa;
    font-family: Roboto, sans-serif;
    overflow: hidden;
}

svg {
    display: block;
    flex: none;
}

p {
    margin: 0;
}

button {
    flex: none;
    padding: 0;
    border: none;
    background: none;
    color: inherit;
    cursor: pointer;
}

.defs {
    position: absolute;
}

/* Status bar */
.status-bar {
    display: flex;
    align-items: center;
    height: 118px;
    padding: 22px 91px 0 155px;
    color: #fff;
}

.clock {
    font-size: 38px;
    font-weight: 500;
}

.app-icon {
    margin-left: 24px;
}

.uber-icon {
    margin: 0 16px 0 18px;
}

.uber {
    font-family: "Open Sans", sans-serif;
    font-size: 21px;
}

.indicators {
    display: flex;
    align-items: center;
    gap: 20px;
    margin-left: auto;
}

.volte {
    margin: 0 -3px 0 8px;
}

.volte-text {
    font: 900 17px Roboto, sans-serif;
    fill: #0b1014;
}

.battery-level {
    font-size: 39px;
    font-weight: 500;
    margin-right: -10px;
}

/* Chat header */
.header {
    display: flex;
    align-items: center;
    height: 160px;
    padding: 0 60px 7px 48px;
    border-bottom: 1px solid #1d2429;
}

.contact {
    display: flex;
    flex: 1;
    align-items: center;
    gap: 38px;
    min-width: 0;
    margin: 0 60px 0 64px;
    color: inherit;
    text-decoration: none;
}

.avatar {
    position: relative;
    flex: none;
}

.logo-top,
.logo-bottom {
    font: 700 15px Roboto, sans-serif;
    text-anchor: middle;
    fill: #7e8b94;
}

.logo-bottom {
    font-size: 16px;
    fill: #4f94b0;
}

.badge {
    position: absolute;
    right: -27px;
    bottom: -18px;
    padding: 10px;
    border-radius: 22px 30px 30px 22px;
    background-color: #0b1014;
}

.names {
    display: flex;
    flex: 1;
    flex-direction: column;
    gap: 5px;
    min-width: 0;
}

.title {
    overflow: hidden;
    font-size: 50px;
    line-height: 58px;
    text-overflow: ellipsis;
    white-space: nowrap;
}

.presence {
    font-size: 38px;
    line-height: 46px;
}

.call {
    margin: 0 36px 0 59px;
}

.more {
    margin-left: 63px;
}

/* Conversation */
.conversation {
    position: relative;
    display: flex;
    flex: 1;
    flex-direction: column;
    min-height: 0;
    overflow: hidden;
}

.wallpaper {
    position: absolute;
    top: 0;
    left: 0;
    width: 100%;
    height: 100%;
    fill: none;
    stroke: #20262a;
    stroke-width: 3;
    stroke-linecap: round;
    stroke-linejoin: round;
}

.wallpaper * {
    vector-effect: non-scaling-stroke;
}

.dots {
    fill: #20262a;
    stroke: none;
}

.chat {
    position: relative;
    flex: 1;
    min-height: 0;
    padding: 0 51px;
    overflow: hidden;
}

.day {
    position: absolute;
    z-index: 1;
    top: 6px;
    left: 50%;
    padding: 2px 27px 0;
    border-radius: 24px;
    background-color: #12181c;
    color: #8d9598;
    font-size: 39px;
    font-weight: 500;
    line-height: 82px;
    transform: translateX(-50%);
}

.messages {
    display: flex;
    flex-direction: column;
    gap: 9px;
    margin-top: -6px;
}

.bubble {
    position: relative;
    max-width: 858px;
    border-radius: 36px;
}

.in {
    align-self: flex-start;
    background-color: #1f272a;
}

.out {
    align-self: flex-end;
    background-color: #144d37;
}

.bubble + .tail {
    margin-top: 21px;
}

.tail::before {
    content: "";
    position: absolute;
    top: 0;
    width: 21px;
    height: 34px;
    background-color: inherit;
}

.in.tail {
    border-top-left-radius: 0;
}

.in.tail::before {
    right: 100%;
    clip-path: path("M21 0H5Q0 0 0 5Q0 8 2 11L21 34Z");
}

.out.tail {
    border-top-right-radius: 0;
}

.out.tail::before {
    left: 100%;
    clip-path: path("M0 0H16Q21 0 21 5Q21 8 19 11L0 34Z");
}

.quote {
    display: flex;
    flex-direction: column;
    gap: 10px;
    margin: 0 12px;
    padding: 21px 25px 16px 24px;
    border-radius: 30px;
    background: linear-gradient(to right, #a791ff 12px, #144432 12px);
    color: #9cb3a9;
    font-size: 42px;
    line-height: 47px;
}

.quote p,
.quote cite {
    padding-left: 12px;
}

.bubble:has(.quote) {
    padding-top: 12px;
}

.quote cite {
    color: #d9d3ff;
    font-style: normal;
    font-weight: 500;
    line-height: 49px;
}

.own {
    background: linear-gradient(to right, #21c063 12px, #1d2329 12px);
    color: #8d9598;
}

.own cite {
    color: #a5e8bd;
}

.body {
    display: flex;
    align-items: flex-end;
    justify-content: space-between;
    gap: 25px;
    padding-right: 26px;
}

.in .body {
    gap: 42px;
}

.body p {
    padding: 19px 0 22px 30px;
    font-size: 48px;
    line-height: 57px;
}

.meta {
    display: flex;
    gap: 12px;
    margin-bottom: 9px;
    color: #9cb3a9;
    font-size: 36px;
    line-height: 42px;
}

.in .meta {
    margin-bottom: 6px;
    color: #a0a5a7;
}

.ticks {
    width: 48px;
    height: 31px;
    margin-top: 3px;
}

.stack,
.tuck {
    flex-direction: column;
}

.body.stack,
.body.tuck {
    gap: 0;
}

.stack p {
    padding-right: 10px;
}

.tuck p {
    align-self: flex-start;
}

.tuck .meta {
    margin-top: -51px;
}

.scrollbar {
    position: absolute;
    top: 1088px;
    right: 6px;
    width: 12px;
    height: 144px;
    background-color: rgba(128, 134, 137, 0.55);
}

.scroll-down {
    position: absolute;
    right: 36px;
    bottom: 215px;
    display: flex;
    align-items: center;
    justify-content: center;
    width: 96px;
    height: 96px;
    border-radius: 50%;
    background-color: #29323a;
    box-shadow: 0 4px 8px rgba(0, 0, 0, 0.4);
    color: #8d9598;
}

/* Message box */
.composer {
    position: relative;
    display: flex;
    align-items: flex-end;
    gap: 14px;
    margin: 0;
    padding: 9px 16px 14px 14px;
}

.pill {
    display: flex;
    flex: 1;
    align-items: center;
    gap: 85px;
    height: 141px;
    min-width: 0;
    padding: 0 40px;
    border-radius: 70px;
    background-color: #1f272a;
    color: #8d9598;
}

.tool {
    display: flex;
    justify-content: center;
    width: 60px;
}

.field {
    flex: 1;
    min-width: 0;
    margin: 0 -40px 0 -43px;
    border-left: 6px solid #21c063;
}

.field input {
    display: block;
    width: 100%;
    height: 73px;
    margin-left: -6px;
    padding: 0;
    border: none;
    outline: none;
    background: none;
    color: #f7f8fa;
    font: 54px Roboto, sans-serif;
}

.field input::placeholder {
    color: #8d9598;
    opacity: 1;
}

.mic {
    display: flex;
    align-items: center;
    justify-content: center;
    width: 144px;
    height: 144px;
    border-radius: 50%;
    background-color: #21c063;
    color: #0b1014;
}

/* System navigation */
.nav-bar {
    display: flex;
    align-items: center;
    justify-content: center;
    gap: 210px;
    height: 132px;
    padding-right: 20px;
    background-color: #000;
}

.nav-bar svg {
    fill: none;
    stroke: #9a9a9a;
    stroke-width: 6;
    stroke-linejoin: round;
}
```
